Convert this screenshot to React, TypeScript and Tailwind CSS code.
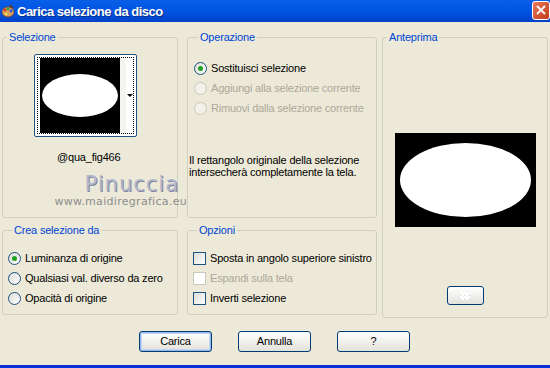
import React from 'react';

function Radio({ checked, disabled, label }: { checked?: boolean; disabled?: boolean; label: string }) {
  return (
    <div className="flex items-center h-[20px] whitespace-nowrap">
      <span
        className={
          'relative w-[13px] h-[13px] rounded-full border flex items-center justify-center ' +
          (disabled ? 'border-[#CAC8BB] bg-[#F2F1EA]' : 'border-[#1C5180] bg-gradient-to-br from-[#DCDCD7] to-white')
        }
      >
        {checked && <span className="w-[5px] h-[5px] rounded-full bg-[#21A121]" />}
      </span>
      <span className={'ml-[4px] ' + (disabled ? 'text-[#ACA899]' : 'text-black')}>{label}</span>
    </div>
  );
}

function Check({ disabled, label }: { disabled?: boolean; label: string }) {
  return (
    <div className="flex items-center h-[20px] whitespace-nowrap">
      <span
        className={
          'w-[13px] h-[13px] border ' +
          (disabled ? 'border-[#CAC8BB] bg-white' : 'border-[#1C5180] bg-gradient-to-br from-[#DCDCD7] to-white')
        }
      />
      <span className={'ml-[4px] ' + (disabled ? 'text-[#ACA899]' : 'text-black')}>{label}</span>
    </div>
  );
}

function XpButton({ label, isDefault }: { label: string; isDefault?: boolean }) {
  return (
    <button
      className={
        'w-[73px] h-[21px] rounded-[3px] border border-[#003C74] bg-gradient-to-b from-white to-[#E3E2DA] text-black ' +
        (isDefault ? 'shadow-[inset_0_0_0_1px_#98B8EA,inset_0_0_0_2px_#C2D6F2]' : '')
      }
    >
      {label}
    </button>
  );
}

function Group({ title, className, children }: { title: string; className: string; children?: React.ReactNode }) {
  return (
    <fieldset className={'border border-[#D0D0BF] rounded-[3px] ' + className}>
      <legend className="ml-[4px] px-[2px] text-[#0046D5] leading-[13px]">{title}</legend>
      {children}
    </fieldset>
  );
}

export default function App() {
  return (
    <div
      className="w-[550px] h-[368px] bg-[#ECE9D8] relative overflow-hidden text-[11px] leading-[13px] tracking-[-0.2px]"
      style={{ fontFamily: '"Liberation Sans", Arial, sans-serif' }}
    >
      {/* title bar */}
      <div className="h-[22px] flex items-center bg-gradient-to-b from-[#0A5FE8] via-[#0054E3] to-[#0041C8]">
        <svg width="14" height="14" viewBox="0 0 14 14" className="ml-[1px]">
          <ellipse cx="7" cy="8" rx="6" ry="5" fill="#D8A060" stroke="#7A4A20" strokeWidth="0.8" />
          <circle cx="4" cy="6" r="1.4" fill="#E03030" />
          <circle cx="7" cy="5" r="1.4" fill="#30A030" />
          <circle cx="10" cy="7" r="1.4" fill="#3050E0" />
          <circle cx="5" cy="10" r="1.3" fill="#F0E040" />
          <path d="M9 1 L12 4" stroke="#603010" strokeWidth="1.5" />
        </svg>
        <span className="ml-[2px] text-white font-bold text-[13px] tracking-[-0.5px] [text-shadow:1px_1px_0_#0A2E8A]">
          Carica selezione da disco
        </span>
        <div className="ml-auto w-[18px] h-[19px] mb-[2px] rounded-[3px] border border-white bg-gradient-to-br from-[#E8785A] to-[#C23A14] flex items-center justify-center">
          <svg width="10" height="10" viewBox="0 0 10 10">
            <path d="M1 1 L9 9 M9 1 L1 9" stroke="white" strokeWidth="1.8" />
          </svg>
        </div>
      </div>

      {/* body */}
      <div className="flex pl-[2px] pt-[9px]">
        <div className="flex flex-col w-[176px]">
          <Group title="Selezione" className="h-[187px]">
            <div className="flex flex-col items-start pl-[31px]">
              <div className="mt-[10px] w-[103px] h-[83px] rounded-[2px] border border-[#1C5180] bg-white p-[2px]">
                <div className="w-full h-full border border-dotted border-black flex">
                  <div className="ml-[2px] w-[82px] h-full bg-black flex items-center justify-center">
                    <div className="w-[76px] h-[43px] rounded-[50%] bg-white" />
                  </div>
                  <div className="w-[6px] bg-[#F4F4F0]" />
                  <div className="flex items-center pl-[1px]">
                    <span className="w-0 h-0 border-l-[3px] border-r-[3px] border-t-[3px] border-l-transparent border-r-transparent border-t-black" />
                  </div>
                </div>
              </div>
              <div className="mt-[14px] ml-[23px] text-black">@qua_fig466</div>
            </div>
          </Group>
          <Group title="Crea selezione da" className="mt-[6px] h-[91px] pl-[5px] pt-[11px]">
            <Radio checked label="Luminanza di origine" />
            <Radio label="Qualsiasi val. diverso da zero" />
            <Radio label="Opacità di origine" />
          </Group>
        </div>

        <div className="flex flex-col w-[190px] ml-[9px]">
          <Group title="Operazione" className="h-[187px] pl-[6px] pt-[14px]">
            <Radio checked label="Sostituisci selezione" />
            <Radio disabled label="Aggiungi alla selezione corrente" />
            <Radio disabled label="Rimuovi dalla selezione corrente" />
            <p className="mt-[36px] -ml-[5px] text-black leading-[12px]">
              Il rettangolo originale della selezione
              <br />
              intersecherà completamente la tela.
            </p>
          </Group>
          <Group title="Opzioni" className="mt-[6px] h-[91px] pl-[5px] pt-[11px]">
            <Check label="Sposta in angolo superiore sinistro" />
            <Check disabled label="Espandi sulla tela" />
            <Check label="Inverti selezione" />
          </Group>
        </div>

        <Group title="Anteprima" className="ml-[5px] w-[166px] h-[287px] flex flex-col items-center">
          <div className="mt-[89px] w-[141px] h-[94px] bg-black flex items-center justify-center">
            <div className="w-[131px] h-[74px] rounded-[50%] bg-white" />
          </div>
          <div className="mt-[59px] w-[37px] h-[19px] rounded-[3px] border border-[#003C74] bg-gradient-to-b from-white to-[#E3E2DA] flex items-center justify-center">
            <div className="w-[10px] h-[8px] bg-[linear-gradient(45deg,#E8E8E8_25%,transparent_25%,transparent_75%,#E8E8E8_75%),linear-gradient(45deg,#E8E8E8_25%,#FFFFFF_25%,#FFFFFF_75%,#E8E8E8_75%)] bg-[length:4px_4px]" />
          </div>
        </Group>
      </div>

      {/* buttons */}
      <div className="flex pl-[139px] gap-[26px] mt-[13px]">
        <XpButton label="Carica" isDefault />
        <XpButton label="Annulla" />
        <XpButton label="?" />
      </div>

      {/* bottom frame */}
      <div className="absolute left-0 right-0 bottom-0 h-[3px] bg-[#0831D9]" />

      {/* watermark */}
      <div className="absolute left-[75px] top-[172px] pointer-events-none flex flex-col items-end w-[112px]">
        <span
          className="text-[21px] leading-[24px] text-[#B3B8CC] tracking-[1px] pr-[8px] [text-shadow:1px_1px_0_#7E849C]"
          style={{ fontFamily: '"DejaVu Sans", sans-serif' }}
        >
          Pinuccia
        </span>
        <span
          className="text-[11px] leading-[12px] text-[#8D8D8D] tracking-[0.3px] whitespace-nowrap"
          style={{ fontFamily: '"DejaVu Sans", sans-serif' }}
        >
          www.maidiregrafica.eu
        </span>
      </div>
    </div>
  );
}
